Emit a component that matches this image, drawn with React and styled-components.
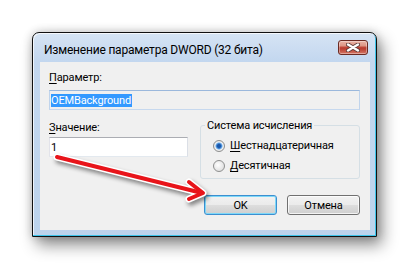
import React from "react";
import styled, { createGlobalStyle } from "styled-components";

const GlobalStyle = createGlobalStyle`
  html, body {
    margin: 0;
    padding: 0;
    background: #fff;
  }
  body {
    font-family: Roboto, "Noto Sans", sans-serif;
    font-size: 11px;
    letter-spacing: -0.15px;
    color: #000;
  }
`;

const Page = styled.div`
  width: 409px;
  height: 269px;
  padding: 32px 0 0 32px;
  box-sizing: border-box;
  overflow: hidden;
`;

const Window = styled.div`
  width: 345px;
  height: 205px;
  box-sizing: border-box;
  display: flex;
  flex-direction: column;
  padding: 0 6px 6px 7px;
  border: 1px solid #111;
  border-radius: 7px 7px 0 0;
  background: linear-gradient(#d6e4f4, #c3d7ef 28px, #bcd3ec);
  box-shadow: 5px 8px 16px rgba(0, 0, 0, 0.45), 0 0 10px rgba(0, 0, 0, 0.2),
    inset -1px -1px 0 #3cc4ea, inset 1px 1px 0 rgba(255, 255, 255, 0.75);
`;

const TitleBar = styled.div`
  height: 29px;
  flex: none;
  display: flex;
  align-items: flex-start;
  justify-content: space-between;
  padding-left: 4px;
`;

const Title = styled.div`
  padding-top: 10px;
  font-size: 12px;
  letter-spacing: -0.2px;
  line-height: 15px;
  color: #000;
`;

const CloseButton = styled.div`
  width: 30px;
  height: 15px;
  margin: 7px 2px 0 0;
  box-sizing: border-box;
  border: 1px solid #6b2a22;
  border-radius: 3px;
  background: linear-gradient(#eab3a5 0%, #dc9483 40%, #c2483a 45%, #b93d30 60%, #d47866 100%);
  box-shadow: inset 0 0 0 1px rgba(255, 255, 255, 0.35);
  display: flex;
  align-items: center;
  justify-content: center;
`;

const Client = styled.div`
  flex: 1;
  position: relative;
  display: flex;
  flex-direction: column;
  padding: 8px 10px 0 9px;
  background: #f0f0f0;
`;

const Label = styled.div`
  line-height: 15px;
  margin-top: ${(p) => p.$gap || 0}px;
`;

const TextBox = styled.div`
  height: 20px;
  margin-top: ${(p) => p.$gap || 0}px;
  box-sizing: border-box;
  display: flex;
  align-items: center;
  padding: 0 1px;
  border: 1px solid;
  border-color: ${(p) =>
    p.$readOnly ? "#9bb8dc #c0d4ec #c6d8ee #c0d4ec" : "#abadb3 #dbdfe6 #e3e9ef #e2e3ea"};
  background: ${(p) => (p.$readOnly ? "#f0f0f0" : "#fff")};
  line-height: 13px;
`;

const Selected = styled.span`
  background: #3399ff;
  color: #fff;
  padding-right: 1px;
`;

const Row = styled.div`
  display: flex;
  gap: 12px;
  margin-top: 9px;
`;

const Column = styled.div`
  width: 139px;
  flex: none;
  display: flex;
  flex-direction: column;
`;

const Group = styled.fieldset`
  width: 160px;
  height: 61px;
  flex: none;
  box-sizing: border-box;
  margin: -1px 0 0 0;
  padding: 5px 0 0 12px;
  border: 1px solid #d5dfe5;
  border-radius: 3px;
  display: flex;
  flex-direction: column;
  gap: 5px;
`;

const Legend = styled.legend`
  margin-left: -8px;
  padding: 0 2px;
  line-height: 15px;
`;

const RadioRow = styled.div`
  display: flex;
  align-items: center;
  gap: 5px;
  line-height: 15px;
`;

const RadioDot = styled.span`
  width: 12px;
  height: 12px;
  flex: none;
  box-sizing: border-box;
  border-radius: 50%;
  border: 1px solid #8e8f8f;
  background: ${(p) =>
    p.$checked
      ? "radial-gradient(circle, #1a56a8 0 1.5px, #3f86d4 2.5px, #8fc0ee 3.3px, #f6f6f6 4px, #e4e4e4 5px)"
      : "radial-gradient(circle at 40% 40%, #ffffff, #e6e6e6 60%, #d4d4d4)"};
`;

const ButtonRow = styled.div`
  display: flex;
  justify-content: flex-end;
  gap: 10px;
  margin-top: 16px;
`;

const Button = styled.button`
  width: 73px;
  height: 20px;
  box-sizing: border-box;
  padding: 0;
  font: inherit;
  letter-spacing: inherit;
  color: #000;
  border: 1px solid ${(p) => (p.$default ? "#3c8fd0" : "#707070")};
  border-radius: 3px;
  background: linear-gradient(#f2f2f2 0%, #ebebeb 48%, #dddddd 52%, #cfcfcf 100%);
  box-shadow: inset 0 0 0 1px ${(p) => (p.$default ? "#7ed8f8" : "rgba(255,255,255,0.75)")};
`;

const Arrow = styled.svg`
  position: absolute;
  left: 0;
  top: 0;
  overflow: visible;
  pointer-events: none;
  filter: drop-shadow(2px 3px 2px rgba(0, 0, 0, 0.45));
`;

const Key = styled.u`
  text-underline-offset: 2px;
`;

const shaft = "M17 95 L158 130";
const head = "M149 120 L163 131 L149 137";

export default function App() {
  return (
    <Page>
      <GlobalStyle />
      <Window>
        <TitleBar>
          <Title>Изменение параметра DWORD (32 бита)</Title>
          <CloseButton>
            <svg width="14" height="9" viewBox="0 0 14 9">
              <path d="M2 1.5 L12 7.5 M12 1.5 L2 7.5" stroke="#5a3a36" strokeWidth="4" strokeLinecap="round" />
              <path d="M2 1.5 L12 7.5 M12 1.5 L2 7.5" stroke="#fff" strokeWidth="2.4" strokeLinecap="round" />
            </svg>
          </CloseButton>
        </TitleBar>
        <Client>
          <Label>
            <Key>П</Key>араметр:
          </Label>
          <TextBox $readOnly $gap={5}>
            <Selected>OEMBackground</Selected>
          </TextBox>
          <Row>
            <Column>
              <Label $gap={1}>
                <Key>З</Key>начение:
              </Label>
              <TextBox $gap={2}>1</TextBox>
            </Column>
            <Group>
              <Legend>Система исчисления</Legend>
              <RadioRow>
                <RadioDot $checked />
                <span>
                  <Key>Ш</Key>естнадцатеричная
                </span>
              </RadioRow>
              <RadioRow>
                <RadioDot />
                <span>
                  <Key>Д</Key>есятичная
                </span>
              </RadioRow>
            </Group>
          </Row>
          <ButtonRow>
            <Button $default>OK</Button>
            <Button>Отмена</Button>
          </ButtonRow>
          <Arrow width="329" height="168" viewBox="0 0 329 168">
            <g fill="none" stroke="#fff" strokeWidth="7" strokeLinecap="round" strokeLinejoin="round">
              <path d={shaft} />
              <path d={head} />
            </g>
            <g fill="none" stroke="#e8141a" strokeWidth="4" strokeLinecap="round" strokeLinejoin="round">
              <path d={shaft} />
              <path d={head} />
            </g>
          </Arrow>
        </Client>
      </Window>
    </Page>
  );
}
